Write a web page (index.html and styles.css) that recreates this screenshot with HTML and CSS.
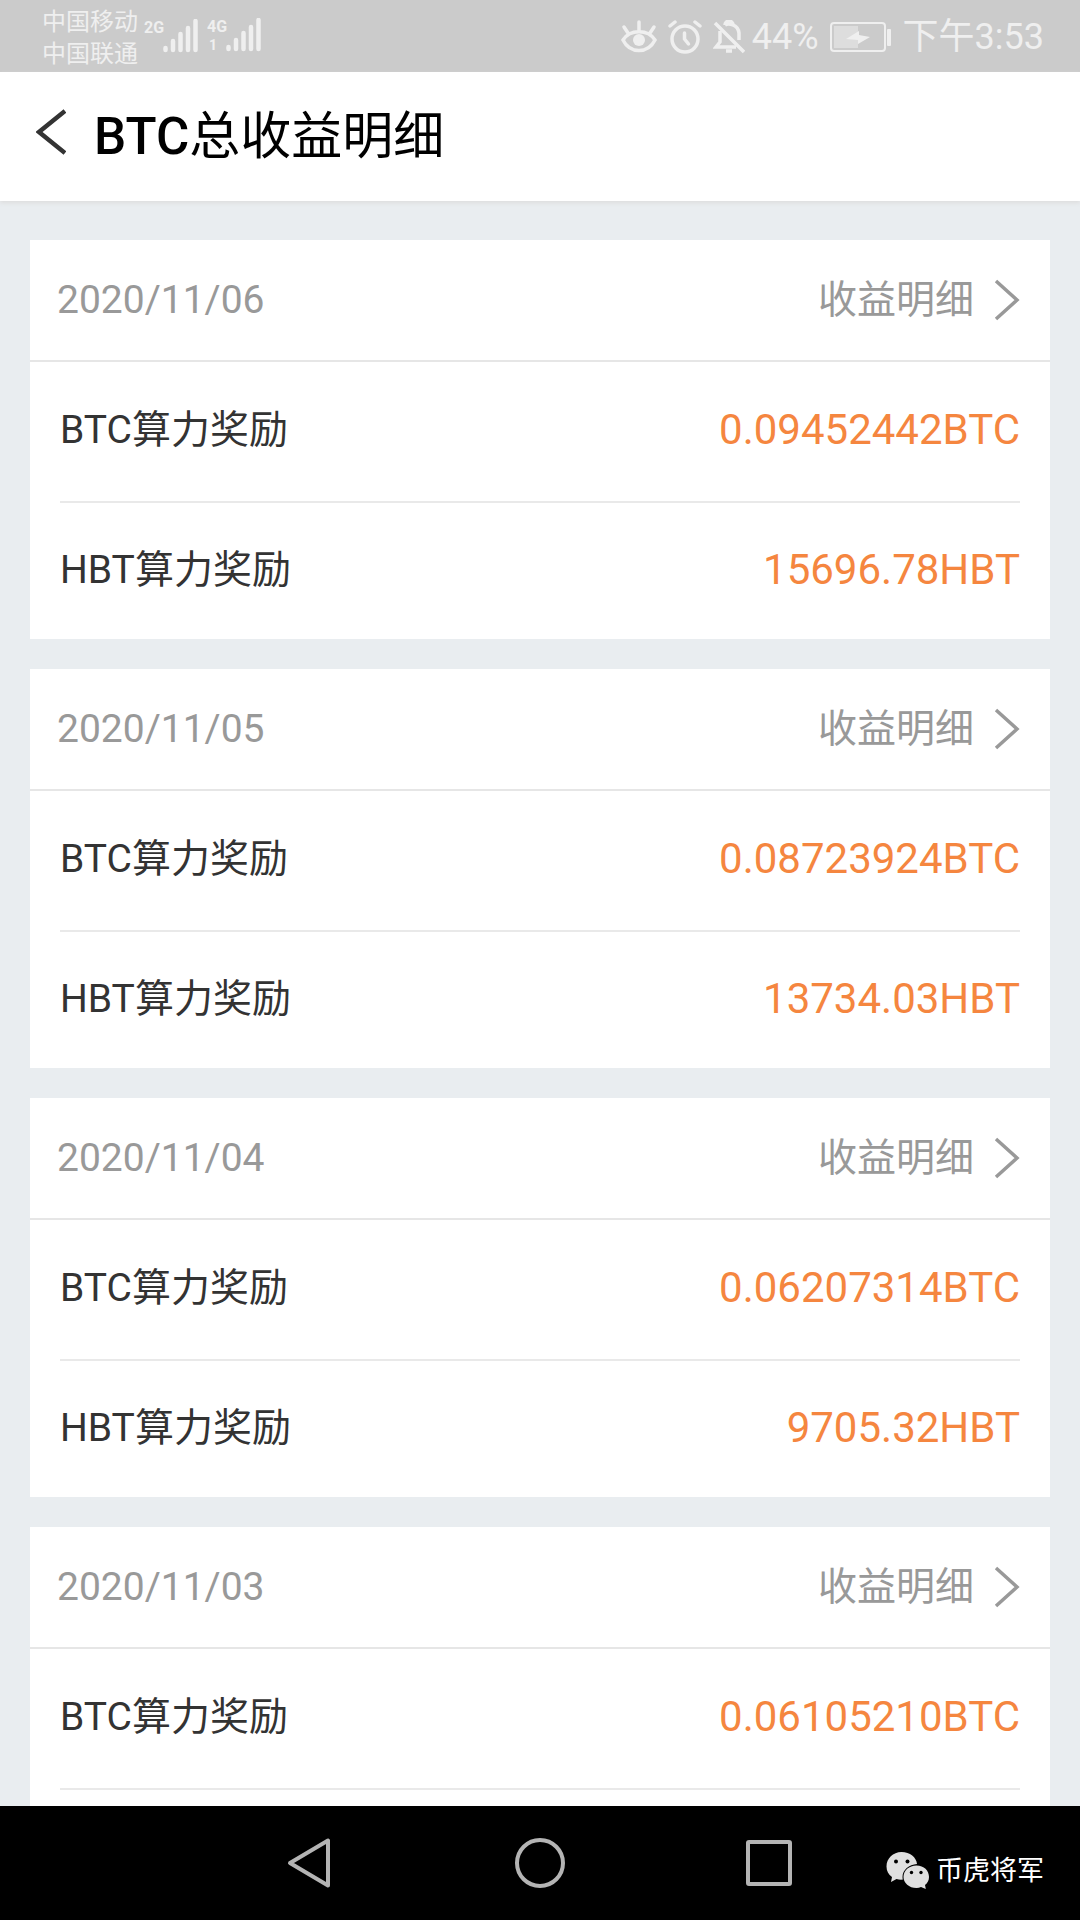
FILE: index.html
```html
<!DOCTYPE html>
<html lang="zh-CN">
<head>
<meta charset="utf-8">
<meta name="viewport" content="width=device-width, initial-scale=1">
<title>BTC总收益明细</title>
<link rel="stylesheet" href="styles.css">
</head>
<body>
<svg class="sprite" aria-hidden="true">
  <symbol id="bars" viewBox="0 0 36 34">
    <path d="M2.500 29v2M10 22v9M17.500 15v16M25 9v22M32.500 2v29" fill="none" stroke="currentColor" stroke-width="4.500" stroke-linecap="round"/>
  </symbol>
  <symbol id="chevron" viewBox="0 0 26 42">
    <path d="M2 2L23 21L2 40" fill="none" stroke="currentColor" stroke-width="3.500"/>
  </symbol>
</svg>
<div class="screen">
  <div class="status">
    <div class="carriers"><span>中国移动</span><span>中国联通</span></div>
    <div class="signal"><span class="net">2G</span><svg class="bars"><use href="#bars"/></svg></div>
    <div class="signal"><span class="net">4G<small>1</small></span><svg class="bars"><use href="#bars"/></svg></div>
    <div class="indicators">
      <svg width="36" height="34" viewBox="0 0 36 34" fill="none" stroke="currentColor" stroke-width="3.500" stroke-linecap="round">
        <path d="M2 20C9 9 27 9 34 20C27 34 9 34 2 20Z"/><path d="M18 2v8M3 7l4 6M33 7l-4 6"/><circle cx="18" cy="20" r="6" fill="currentColor" stroke="none"/>
      </svg>
      <svg width="34" height="34" viewBox="0 0 34 34" fill="none" stroke="currentColor" stroke-width="3.500" stroke-linecap="round">
        <circle cx="17" cy="19" r="13"/><path d="M16.500 13v6l4 5"/><path d="M2 6l5-4M32 6l-5-4"/>
      </svg>
      <svg width="32" height="34" viewBox="0 0 32 34" fill="none" stroke="currentColor" stroke-width="3.500">
        <path d="M2 3L31 32"/><path d="M7 11v11l-4 5h20"/><path d="M12 5C15 3 25 4 26 13v7"/><path d="M12 5a4 4 0 0 1 8 0"/><path d="M13 31h6"/>
      </svg>
      <span class="percent">44%</span>
      <svg width="62" height="32" viewBox="0 0 62 32">
        <rect x="1" y="2" width="54" height="28" rx="3" fill="none" stroke="currentColor" stroke-width="2"/>
        <path d="M4 5h24v22H4z" fill="currentColor" opacity=".5"/>
        <path d="M16 18L29 10v4L40 16L28 23v-4z" fill="currentColor"/>
        <rect x="57" y="8" width="4" height="17" rx="1" fill="currentColor"/>
      </svg>
      <time>下午3:53</time>
    </div>
  </div>

  <header class="topbar">
    <button class="back" type="button" aria-label="返回">
      <svg width="30" height="46" viewBox="0 0 30 46" fill="none" stroke="currentColor" stroke-width="4.500"><path d="M29 2L3 23L29 44"/></svg>
    </button>
    <h1>BTC<span>总收益明细</span></h1>
  </header>

  <main class="list">
    <section class="card">
      <div class="card-head"><time>2020/11/06</time><a class="more" href="#">收益明细<svg class="chevron"><use href="#chevron"/></svg></a></div>
      <dl class="rewards">
        <div class="reward"><dt>BTC算力奖励</dt><dd>0.09452442BTC</dd></div>
        <div class="reward"><dt>HBT算力奖励</dt><dd>15696.78HBT</dd></div>
      </dl>
    </section>
    <section class="card">
      <div class="card-head"><time>2020/11/05</time><a class="more" href="#">收益明细<svg class="chevron"><use href="#chevron"/></svg></a></div>
      <dl class="rewards">
        <div class="reward"><dt>BTC算力奖励</dt><dd>0.08723924BTC</dd></div>
        <div class="reward"><dt>HBT算力奖励</dt><dd>13734.03HBT</dd></div>
      </dl>
    </section>
    <section class="card">
      <div class="card-head"><time>2020/11/04</time><a class="more" href="#">收益明细<svg class="chevron"><use href="#chevron"/></svg></a></div>
      <dl class="rewards">
        <div class="reward"><dt>BTC算力奖励</dt><dd>0.06207314BTC</dd></div>
        <div class="reward"><dt>HBT算力奖励</dt><dd>9705.32HBT</dd></div>
      </dl>
    </section>
    <section class="card">
      <div class="card-head"><time>2020/11/03</time><a class="more" href="#">收益明细<svg class="chevron"><use href="#chevron"/></svg></a></div>
      <dl class="rewards">
        <div class="reward"><dt>BTC算力奖励</dt><dd>0.06105210BTC</dd></div>
        <div class="reward"></div>
      </dl>
    </section>
  </main>

  <nav class="navbar">
    <button type="button" aria-label="返回"><svg width="52" height="52" viewBox="0 0 52 52"><path d="M44 3.500V48.500L6 26Z"/></svg></button>
    <button type="button" aria-label="主屏幕"><svg width="52" height="52" viewBox="0 0 52 52"><circle cx="26" cy="26" r="23"/></svg></button>
    <button type="button" aria-label="最近任务"><svg width="52" height="52" viewBox="0 0 52 52"><rect x="4" y="5" width="42" height="42" rx="1"/></svg></button>
    <div class="account">
      <svg width="44" height="38" viewBox="0 0 44 38" fill="#e0e0e0">
        <path d="M15.500 0C24 0 30.500 5.500 31 12C23 12.500 16.500 18 16.500 25q0 1.500 .4 2.600Q13.500 28 10.500 27L5 30L6 25C2.500 22.500 .5 19 .5 14.500C.5 6.500 7 0 15.500 0Z"/>
        <path d="M30.500 13.500C38 13.500 43 18.500 43 25C43 28.500 41.500 31 39 33L39.800 37L35 35Q33 36 30.500 36C23 36 17.500 31 17.500 25C17.500 18.500 23 13.500 30.500 13.500Z"/>
        <g fill="#000"><circle cx="10" cy="9.500" r="2"/><circle cx="21.500" cy="9.500" r="2"/><circle cx="25.500" cy="20.500" r="1.700"/><circle cx="35" cy="20.500" r="1.700"/></g>
      </svg>
      <span>币虎将军</span>
    </div>
  </nav>
</div>
</body>
</html>
```
FILE: styles.css
```css
* {
  box-sizing: border-box;
}

body {
  margin: 0;
  font-family: Roboto, "Noto Sans CJK SC", sans-serif;
  line-height: 48px;
  color: #333;
  background: #e9edf0;
}

h1,
dl,
dd {
  margin: 0;
}

button {
  padding: 0;
  border: 0;
  background: none;
  color: inherit;
}

svg {
  display: block;
  flex: none;
}

.sprite {
  display: none;
}

.screen {
  display: flex;
  flex-direction: column;
  height: 100vh;
}

/* System status bar */
.status {
  flex: none;
  display: flex;
  align-items: center;
  height: 72px;
  padding: 0 36px 0 42px;
  background: #cbcbcb;
  color: #efefef;
}

.carriers {
  display: flex;
  flex-direction: column;
  padding-top: 4px;
  font-size: 24px;
  line-height: 32px;
}

.signal {
  display: flex;
  align-items: flex-start;
  margin-left: 6px;
}

.signal + .signal {
  margin-left: 8px;
}

.net {
  display: flex;
  flex-direction: column;
  width: 19px;
  font-size: 16px;
  font-weight: 700;
  line-height: 18px;
}

.net small {
  padding-left: 2px;
  font-size: 14px;
}

.bars {
  width: 36px;
  height: 34px;
}

.indicators {
  display: flex;
  align-items: center;
  margin-left: auto;
  padding-top: 2px;
  font-size: 36px;
  gap: 11px;
}

.percent {
  margin-left: -4px;
}

/* Title bar */
.topbar {
  position: relative;
  flex: none;
  display: flex;
  align-items: center;
  height: 129px;
  padding: 0 36px;
  gap: 28px;
  background: #fff;
  box-shadow: 0 2px 4px #ddd;
}

.back {
  padding-bottom: 10px;
}

h1 {
  font-size: 51px;
  font-weight: 500;
  line-height: 60px;
  color: #000;
}

h1 span {
  font-weight: 400;
}

/* Daily reward cards */
.list {
  flex: 1;
  min-height: 0;
  overflow: hidden;
  display: flex;
  flex-direction: column;
  gap: 30px;
  padding: 39px 30px 0;
}

.card {
  flex: none;
  background: #fff;
}

.card-head {
  display: flex;
  align-items: center;
  justify-content: space-between;
  height: 122px;
  padding: 0 30px 0 27px;
  border-bottom: 2px solid #e6e6e6;
  font-size: 39px;
  color: #999;
}

.more {
  display: flex;
  align-items: center;
  gap: 20px;
  color: inherit;
  text-decoration: none;
}

.chevron {
  width: 26px;
  height: 42px;
}

.rewards {
  padding: 0 30px;
}

.reward {
  display: flex;
  align-items: center;
  justify-content: space-between;
  height: 136px;
  padding-bottom: 2px;
}

.reward:first-child {
  height: 141px;
  padding-bottom: 4px;
  border-bottom: 2px solid #e9e9e9;
}

.reward dt {
  font-size: 39px;
}

.reward dd {
  font-size: 42px;
  color: #f5863f;
}

/* System navigation bar */
.navbar {
  flex: none;
  position: relative;
  display: flex;
  align-items: center;
  justify-content: center;
  height: 114px;
  background: #000;
}

.navbar button {
  display: flex;
  justify-content: center;
  width: 230px;
}

.navbar button svg {
  fill: none;
  stroke: #b4b4b4;
  stroke-width: 4;
  stroke-linejoin: round;
}

.account {
  position: absolute;
  right: 36px;
  bottom: 29px;
  display: flex;
  align-items: center;
  gap: 6px;
  font-size: 27px;
  line-height: 40px;
  color: #fff;
}
```
